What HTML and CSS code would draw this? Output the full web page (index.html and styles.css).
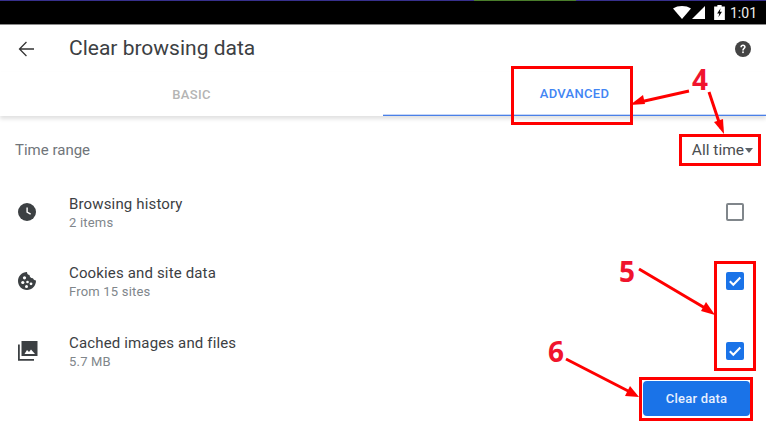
FILE: index.html
```html
<!DOCTYPE html>
<html lang="en">
<head>
    <meta charset="UTF-8">
    <title>Clear browsing data</title>
    <link rel="stylesheet" href="styles.css">
</head>
<body>
    <div class="screen">
        <div class="status-bar">
            <svg class="wifi" width="18" height="13" viewBox="0 0 18 13"><path d="M0 2.500C5 -0.800 13 -0.800 18 2.500L9 13z" fill="#fff"/></svg>
            <svg class="signal" width="13" height="13" viewBox="0 0 13 13"><path d="M0 13L13 0V13z" fill="#fff"/></svg>
            <svg class="battery" width="11" height="15" viewBox="0 0 10 14"><path d="M3 0H7V1.500H10V14H0V1.500H3z" fill="#fff"/><path d="M6 3L2.800 8H4.800L4 11.500L7.300 6.300H5.300z" fill="#000"/></svg>
            <span class="clock">1:01</span>
        </div>

        <div class="toolbar">
            <svg class="back" width="16" height="16" viewBox="0 0 16 16"><path d="M16 7.300H3.200L8.900 1.400L8 0.400L0.600 8L8 15.600L8.900 14.600L3.200 8.700H16z" fill="#333"/></svg>
            <h1>Clear browsing data</h1>
            <svg class="help" width="16" height="16" viewBox="0 0 16 16"><circle cx="8" cy="8" r="8" fill="#444"/><path d="M5.300 6.200C5.300 4.700 6.500 3.600 8 3.600C9.600 3.600 10.700 4.700 10.700 6C10.700 7.700 8.800 7.800 8.800 9.500H7.200C7.200 7.200 9 7.300 9 6C9 5.500 8.600 5 8 5C7.400 5 7 5.500 7 6.200z" fill="#fff"/><rect x="7.200" y="10.400" width="1.600" height="1.700" fill="#fff"/></svg>
        </div>

        <div class="tabs">
            <div class="tab">BASIC</div>
            <div class="tab active">ADVANCED</div>
        </div>

        <div class="time-row">
            <span class="time-label">Time range</span>
            <span class="time-select">All time<i class="caret"></i></span>
        </div>

        <div class="items">
            <div class="item">
                <svg class="item-icon" width="20" height="20" viewBox="0 -1 20 20"><circle cx="9" cy="9" r="9" fill="#3c4043"/><path d="M8.400 4.500H9.800V8.700L13 10.600L12.300 11.800L8.400 9.500z" fill="#fff"/></svg>
                <div class="item-text">
                    <div class="item-title">Browsing history</div>
                    <div class="item-sub">2 items</div>
                </div>
                <span class="check"></span>
            </div>
            <div class="item">
                <svg class="item-icon" width="20" height="20" viewBox="0 -1 20 20"><path d="M9 0C9 2 10 3 11.500 3C11.500 5 13 6.500 15 6.300C15.200 7.500 16.500 8.500 18 8.500C18 14 14 18 9 18C4 18 0 14 0 9C0 4 4 0 9 0z" fill="#3c4043"/><circle cx="6.500" cy="5.800" r="1.600" fill="#fff"/><circle cx="4.800" cy="10.500" r="1.600" fill="#fff"/><circle cx="9.500" cy="10" r="1.300" fill="#fff"/><circle cx="13" cy="11.800" r="1.400" fill="#fff"/><circle cx="8.500" cy="14.500" r="1.500" fill="#fff"/></svg>
                <div class="item-text">
                    <div class="item-title">Cookies and site data</div>
                    <div class="item-sub">From 15 sites</div>
                </div>
                <span class="check on"><svg width="18" height="18" viewBox="0 0 18 18"><path d="M3.800 9.300L7.300 12.800L14.300 5.500" fill="none" stroke="#fff" stroke-width="2"/></svg></span>
            </div>
            <div class="item">
                <svg class="item-icon" width="20" height="20" viewBox="0 0 20 20"><path d="M3.500 0H19.500V15H3.500z" fill="#3c4043"/><path d="M0 3.500H1.800V18H16V19.800H0z" fill="#3c4043"/><path d="M6.500 13L9 9L11 11L13 8.500L17 13z" fill="#fff"/></svg>
                <div class="item-text">
                    <div class="item-title">Cached images and files</div>
                    <div class="item-sub">5.7 MB</div>
                </div>
                <span class="check on"><svg width="18" height="18" viewBox="0 0 18 18"><path d="M3.800 9.300L7.300 12.800L14.300 5.500" fill="none" stroke="#fff" stroke-width="2"/></svg></span>
            </div>
        </div>

        <div class="actions">
            <button class="clear-btn">Clear data</button>
        </div>

        <!-- red annotations drawn on top of the screenshot -->
        <div class="mark mark-tab"></div>
        <div class="mark mark-time"></div>
        <div class="mark mark-checks"></div>
        <div class="mark mark-btn"></div>
        <span class="step step-4">4</span>
        <span class="step step-5">5</span>
        <span class="step step-6">6</span>
        <svg class="arrows" width="766" height="430" viewBox="0 0 766 430">
            <g stroke="#f00" stroke-width="3" fill="none">
                <path d="M689 91L640 102"/>
                <path d="M709 92L721 128"/>
                <path d="M639 269L710 311"/>
                <path d="M566 359L634 394"/>
            </g>
            <g fill="#f00">
                <path d="M630 105L643 95L645 104z"/>
                <path d="M724 134L714 122L723 119z"/>
                <path d="M715 315L701 311L706 302z"/>
                <path d="M639 397L625 396L630 386z"/>
            </g>
        </svg>
    </div>
</body>
</html>
```

FILE: styles.css
```css
html, body {
    margin: 0;
    padding: 0;
}
body {
    font-family: Roboto, Arial, sans-serif;
    background: #fff;
    color: #3c4043;
}
.screen {
    position: relative;
    width: 766px;
    height: 430px;
    overflow: hidden;
    background: #fff;
}
.status-bar {
    display: flex;
    align-items: center;
    justify-content: flex-end;
    height: 25px;
    box-sizing: border-box;
    padding: 1px 9px 0 0;
    background: linear-gradient(to right, #37308c 474px, #4a7d2b 474px, #4a7d2b 576px, #37308c 576px) top / 100% 1px no-repeat #000;
    border-bottom: 1px solid #8a8a8a;
    color: #eee;
    font-size: 14px;
}
.wifi {
    margin-right: 1px;
}
.signal {
    margin-right: 9px;
}
.battery {
    margin-right: 5px;
}
.toolbar {
    display: flex;
    align-items: center;
    height: 47px;
    padding: 0 15px 0 18px;
}
.toolbar h1 {
    flex: 1;
    margin: 0 0 0 35px;
    padding-bottom: 2px;
    font-size: 21px;
    font-weight: 400;
    color: #3c4043;
}
.tabs {
    display: flex;
    height: 44px;
    box-shadow: 0 3px 4px rgba(0, 0, 0, 0.12);
}
.tab {
    flex: 1;
    display: flex;
    align-items: center;
    justify-content: center;
    font-size: 13px;
    font-weight: 500;
    letter-spacing: 0.3px;
    color: #b4b4b4;
}
.tab.active {
    color: #4285f4;
    border-bottom: 1px solid #4a80e8;
    box-shadow: 0 -1px 0 #c6d6f6 inset;
    box-sizing: border-box;
}
.time-row {
    display: flex;
    align-items: center;
    justify-content: space-between;
    height: 34px;
    padding: 17px 13px 0 15px;
}
.time-label {
    font-size: 15px;
    color: #70757a;
}
.time-select {
    display: flex;
    align-items: center;
    font-size: 15.500px;
    color: #4a4d50;
}
.caret {
    width: 0;
    height: 0;
    margin-left: 1px;
    border: 4.500px solid transparent;
    border-top: 5px solid #5f6368;
    border-bottom: 0;
}
.items {
    display: flex;
    flex-direction: column;
    gap: 9.500px;
    margin-top: 14.500px;
}
.item {
    display: flex;
    align-items: center;
    height: 60px;
    padding: 0 22px 0 18px;
}
.item-icon {
    flex: none;
}
.item-text {
    flex: 1;
    margin: 2px 0 0 31px;
}
.item-title {
    font-size: 15px;
    line-height: 20px;
    letter-spacing: 0.15px;
}
.item-sub {
    font-size: 13px;
    line-height: 18px;
    letter-spacing: 0.2px;
    color: #80868b;
}
.check {
    display: block;
    width: 18px;
    height: 18px;
    box-sizing: border-box;
    border: 2px solid #80868b;
    border-radius: 2px;
}
.check.on {
    border: 0;
    background: #1a73e8;
}
.check svg {
    display: block;
}
.actions {
    display: flex;
    justify-content: flex-end;
    padding: 0.500px 16px 0 0;
}
.clear-btn {
    width: 107px;
    height: 35px;
    border: 0;
    border-radius: 4px;
    background: #1a73e8;
    color: #e8f0fe;
    font: 500 13px Roboto, Arial, sans-serif;
    letter-spacing: 0.2px;
}
.mark {
    position: absolute;
    box-sizing: border-box;
    border: 3px solid #f00;
}
.mark-tab {
    left: 511px;
    top: 66px;
    width: 122px;
    height: 59px;
}
.mark-time {
    left: 679px;
    top: 134px;
    width: 82px;
    height: 32px;
}
.mark-checks {
    left: 714px;
    top: 261px;
    width: 42px;
    height: 110px;
}
.mark-btn {
    left: 639px;
    top: 377px;
    width: 114px;
    height: 44px;
}
.step {
    position: absolute;
    font-family: "Open Sans", sans-serif;
    font-size: 28px;
    font-weight: 700;
    line-height: 30px;
    color: #f0142d;
}
.step-4 {
    left: 692px;
    top: 64px;
}
.step-5 {
    left: 619px;
    top: 256px;
}
.step-6 {
    left: 548px;
    top: 336px;
}
.arrows {
    position: absolute;
    left: 0;
    top: 0;
}
```
